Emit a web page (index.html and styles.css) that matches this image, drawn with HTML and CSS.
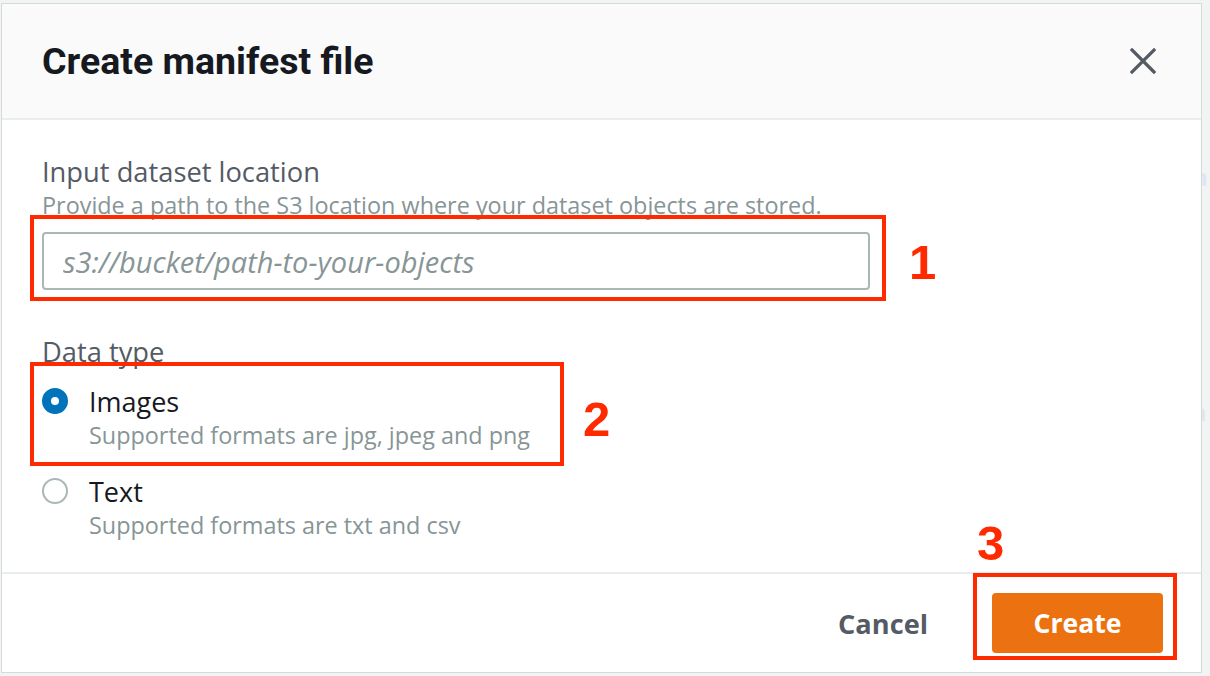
FILE: index.html
```html
<!DOCTYPE html>
<html>
<head>
<meta charset="utf-8">
<link rel="stylesheet" href="styles.css">
</head>
<body>
<div class="backdrop-text">
  <span class="bg-letter bg-blue">n</span>
  <span class="bg-letter bg-gray">a</span>
</div>
<div class="modal">
  <div class="modal-header">
    <h1 class="modal-title">Create manifest file</h1>
    <button class="close-btn" aria-label="Close">
      <svg width="26" height="26" viewBox="0 0 26 26"><path d="M2 2 L24 24 M24 2 L2 24" stroke="#545b64" stroke-width="3.2" stroke-linecap="square" fill="none"/></svg>
    </button>
  </div>
  <div class="modal-body">
    <div class="field">
      <div class="label">Input dataset location</div>
      <div class="desc">Provide a path to the S3 location where your dataset objects are stored.</div>
      <input class="text-input" type="text" placeholder="s3://bucket/path-to-your-objects">
    </div>
    <div class="field field-type">
      <div class="label">Data type</div>
      <div class="radio-row radio-first">
        <span class="radio radio-checked"></span>
        <div class="radio-text">
          <div class="radio-label">Images</div>
          <div class="desc">Supported formats are jpg, jpeg and png</div>
        </div>
      </div>
      <div class="radio-row radio-second">
        <span class="radio"></span>
        <div class="radio-text">
          <div class="radio-label">Text</div>
          <div class="desc">Supported formats are txt and csv</div>
        </div>
      </div>
    </div>
  </div>
  <div class="modal-footer">
    <button class="btn-cancel">Cancel</button>
    <button class="btn-create">Create</button>
  </div>

  <div class="annot-box box-1"></div>
  <div class="annot-num num-1">1</div>
  <div class="annot-box box-2"></div>
  <div class="annot-num num-2">2</div>
  <div class="annot-box box-3"></div>
  <div class="annot-num num-3">3</div>
</div>
</body>
</html>
```

FILE: styles.css
```css
* { box-sizing: border-box; }
html, body {
  margin: 0;
  padding: 0;
}
body {
  width: 1210px;
  height: 676px;
  overflow: hidden;
  background: #f2f3f3;
  font-family: "Open Sans", Roboto, sans-serif;
  position: relative;
  padding: 3px 0 0 1px;
}
.backdrop-text {
  position: absolute;
  left: 0;
  top: 0;
  width: 1210px;
  height: 676px;
}
.bg-letter {
  position: absolute;
  left: 1192px;
  font-size: 24px;
  font-weight: 700;
}
.bg-blue { top: 160px; color: #dbe8f2; }
.bg-gray { top: 395px; color: #e3e6e6; }

.modal {
  position: relative;
  width: 1201px;
  height: 670px;
  background: #ffffff;
  border: 1px solid #d5dbdb;
  display: flex;
  flex-direction: column;
  z-index: 1;
}
.modal-header {
  height: 116px;
  background: #fafafa;
  border-bottom: 2px solid #eaeded;
  display: flex;
  align-items: center;
  justify-content: space-between;
  padding: 0 45px 0 40px;
}
.modal-title {
  margin: 0;
  font-family: Roboto, "Open Sans", sans-serif;
  font-size: 37.5px;
  font-weight: 700;
  color: #16191f;
}
.close-btn {
  border: none;
  background: transparent;
  padding: 0;
  width: 26px;
  height: 26px;
  display: flex;
}
.modal-body {
  flex: 1;
  padding: 36px 40px 0 40px;
}
.label {
  font-size: 27.3px;
  line-height: 32px;
  color: #545b64;
}
.desc {
  font-size: 23.4px;
  line-height: 26px;
  color: #879596;
}
.field .label + .desc {
  margin-top: 4px;
}
.text-input {
  display: block;
  margin-top: 14px;
  width: 828px;
  height: 58px;
  border: 2px solid #aab7b8;
  border-radius: 4px;
  padding: 0 19px;
  font-family: "Open Sans", Roboto, sans-serif;
  font-size: 29px;
  font-style: italic;
  color: #16191f;
  background: #fff;
  outline: none;
}
.text-input::placeholder {
  color: #879596;
  font-style: italic;
}
.field-type {
  margin-top: 46px;
}
.radio-row {
  display: flex;
  gap: 21px;
}
.radio-first { margin-top: 18px; }
.radio-second { margin-top: 28px; }
.radio {
  flex: none;
  width: 26px;
  height: 26px;
  border-radius: 50%;
  border: 2px solid #aab7b8;
  background: #fff;
  margin-top: 2px;
}
.radio-checked {
  border: 9px solid #0073bb;
}
.radio-label {
  font-size: 27px;
  line-height: 32px;
  color: #16191f;
}
.radio-text .desc {
  margin-top: 4px;
}
.radio-second .radio-text .desc {
  margin-top: 4px;
}
.modal-footer {
  height: 100px;
  border-top: 2px solid #eaeded;
  display: flex;
  align-items: center;
  justify-content: flex-end;
  padding: 0 38px 0 40px;
  gap: 54px;
}
.btn-cancel {
  border: none;
  background: transparent;
  font-family: "Open Sans", Roboto, sans-serif;
  font-size: 27.2px;
  font-weight: 700;
  color: #545b64;
  padding: 0 10px;
}
.btn-create {
  width: 171px;
  height: 60px;
  border: none;
  border-radius: 4px;
  background: #ec7211;
  color: #fff;
  font-family: "Open Sans", Roboto, sans-serif;
  font-size: 26.6px;
  font-weight: 700;
}

.annot-box {
  position: absolute;
  border: 4px solid #ff2a00;
}
.box-1 { left: 28px; top: 211px; width: 856px; height: 86px; }
.box-2 { left: 28px; top: 358px; width: 534px; height: 104px; }
.box-3 { left: 971px; top: 569px; width: 204px; height: 87px; }
.annot-num {
  position: absolute;
  font-family: "Liberation Sans", Arial, sans-serif;
  font-weight: 700;
  font-size: 49px;
  line-height: 1;
  color: #ff2a00;
}
.num-1 { left: 907px; top: 234px; }
.num-2 { left: 581px; top: 391px; }
.num-3 { left: 975px; top: 515px; }
```
